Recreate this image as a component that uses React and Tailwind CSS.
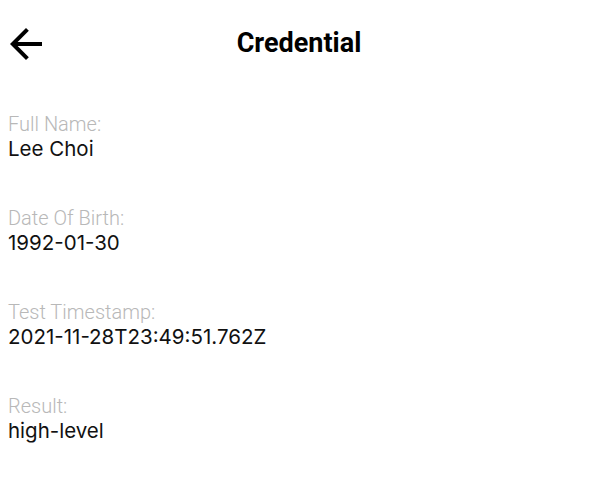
import React from "react";

const FIELDS = [
  { label: "Full Name:", value: "Lee Choi" },
  { label: "Date Of Birth:", value: "1992-01-30" },
  { label: "Test Timestamp:", value: "2021-11-28T23:49:51.762Z" },
  { label: "Result:", value: "high-level" },
];

function BackArrow() {
  return (
    <svg width="48" height="48" viewBox="0 0 24 24" fill="#000">
      <path d="M20 11H7.83l5.59-5.59L12 4l-8 8 8 8 1.41-1.41L7.83 13H20v-2z" />
    </svg>
  );
}

export default function App() {
  return (
    <div
      className="w-[598px] h-[484px] bg-white overflow-hidden"
      style={{ fontFamily: "Inter, 'Liberation Sans', sans-serif" }}
    >
      <div className="relative h-[86px] flex items-center justify-center">
        <button className="absolute left-[2px] top-[20px]">
          <BackArrow />
        </button>
        <h1
          className="text-[27px] font-bold text-black leading-none"
          style={{ fontFamily: "Roboto, sans-serif" }}
        >
          Credential
        </h1>
      </div>

      <div className="pt-[26px] pl-[8px] flex flex-col gap-[44px]">
        {FIELDS.map((f) => (
          <div key={f.label} className="flex flex-col">
            <span
              className="text-[20px] leading-[24px] font-light text-[#b8b8b8]"
              style={{ fontFamily: "Roboto, sans-serif" }}
            >
              {f.label}
            </span>
            <span className="text-[20.5px] leading-[26px] text-[#111]">
              {f.value}
            </span>
          </div>
        ))}
      </div>
    </div>
  );
}
